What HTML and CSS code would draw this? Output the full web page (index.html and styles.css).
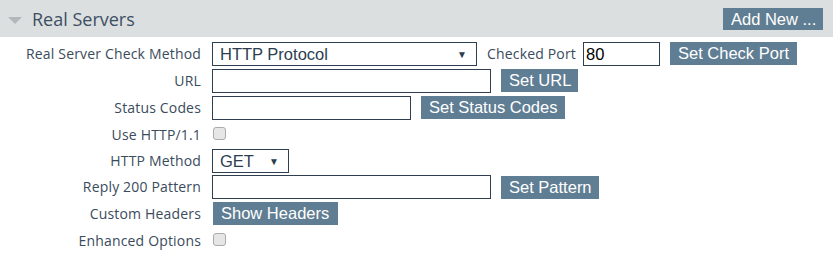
FILE: index.html
```html
<!DOCTYPE html>
<html>
<head>
<meta charset="utf-8">
<link rel="stylesheet" href="styles.css">
</head>
<body>
<div class="header">
  <span class="caret"></span>
  <span class="title">Real Servers</span>
  <button class="btn add-new">Add New ...</button>
</div>
<div class="form">
  <label class="lbl">Real Server Check Method</label>
  <div class="ctl">
    <div class="select sel-method"><span>HTTP Protocol</span><span class="arrow">▼</span></div>
    <span class="lbl inline">Checked Port</span>
    <input class="input port" type="text" value="80">
    <button class="btn w-port">Set Check Port</button>
  </div>

  <label class="lbl">URL</label>
  <div class="ctl">
    <input class="input wide" type="text">
    <button class="btn w-url">Set URL</button>
  </div>

  <label class="lbl">Status Codes</label>
  <div class="ctl">
    <input class="input mid" type="text">
    <button class="btn w-status">Set Status Codes</button>
  </div>

  <label class="lbl">Use HTTP/1.1</label>
  <div class="ctl"><span class="cb"></span></div>

  <label class="lbl">HTTP Method</label>
  <div class="ctl">
    <div class="select sel-get"><span>GET</span><span class="arrow">▼</span></div>
  </div>

  <label class="lbl">Reply 200 Pattern</label>
  <div class="ctl">
    <input class="input wide" type="text">
    <button class="btn w-pattern">Set Pattern</button>
  </div>

  <label class="lbl">Custom Headers</label>
  <div class="ctl">
    <button class="btn w-headers">Show Headers</button>
  </div>

  <label class="lbl">Enhanced Options</label>
  <div class="ctl"><span class="cb"></span></div>
</div>
</body>
</html>
```
FILE: styles.css
```css
html, body {
  margin: 0;
  padding: 0;
  background: #ffffff;
}
body {
  width: 833px;
  height: 254px;
  overflow: hidden;
  font-family: "Open Sans", "Liberation Sans", sans-serif;
}
.header {
  height: 37px;
  background: #dcdfe0;
  display: flex;
  align-items: center;
  padding: 0 10px 0 8px;
}
.caret {
  width: 0;
  height: 0;
  border-left: 7px solid transparent;
  border-right: 7px solid transparent;
  border-top: 7px solid #b3b7ba;
  margin-top: 3px;
  margin-right: 10px;
}
.title {
  font-size: 18px;
  color: #3b4f63;
  flex: 1;
}
.btn {
  font-family: "Liberation Sans", Arial, sans-serif;
  font-size: 16.5px;
  color: #ffffff;
  background: #5f7e93;
  border: none;
  height: 23px;
  line-height: 23px;
  padding: 0 0 0 8px;
  margin: 0;
  text-align: left;
  white-space: nowrap;
  box-sizing: border-box;
}
.add-new { width: 100px; height: 22px; line-height: 22px; margin-top: 1px; }
.w-port { width: 127px; margin-left: 10px; }
.w-url { width: 77px; margin-left: 10px; }
.w-status { width: 144px; margin-left: 10px; }
.w-pattern { width: 98px; margin-left: 10px; margin-top: 1px; }
.w-headers { width: 125px; margin-left: 1px; }

.form {
  display: grid;
  grid-template-columns: 201px 1fr;
  grid-template-rows: 24px 24px 24px 23px 23px 24px 24px 24px;
  column-gap: 11px;
  row-gap: 3px;
  padding-top: 5px;
}
.lbl {
  font-family: "Open Sans", "Liberation Sans", sans-serif;
  font-size: 14px;
  letter-spacing: 0.17px;
  color: #3a4b5c;
  text-align: right;
  line-height: 24px;
  white-space: nowrap;
}
.lbl.inline {
  margin: 0 7px 0 10px;
}
.ctl {
  display: flex;
  align-items: flex-start;
}
.input, .select {
  box-sizing: border-box;
  height: 24px;
  border: 1px solid #2f3f50;
  background: #fff;
  margin: 0;
  font-family: "Liberation Sans", Arial, sans-serif;
  font-size: 16.5px;
  outline: none;
  flex: none;
}
.input { padding: 0 2px; }
.wide { width: 279px; }
.mid { width: 199px; }
.port { width: 77px; color: #000; }
.select {
  display: flex;
  align-items: center;
  justify-content: space-between;
  padding: 0 9px 0 7px;
  color: #2c3e50;
}
.sel-method { width: 265px; }
.sel-get { width: 77px; }
.arrow {
  font-size: 10px;
  color: #2c3e50;
}
.cb {
  display: block;
  width: 13px;
  height: 13px;
  box-sizing: border-box;
  border: 1px solid #a9abad;
  border-radius: 3px;
  background: #e6e6e6;
  margin: 4px 0 0 1px;
}
```
